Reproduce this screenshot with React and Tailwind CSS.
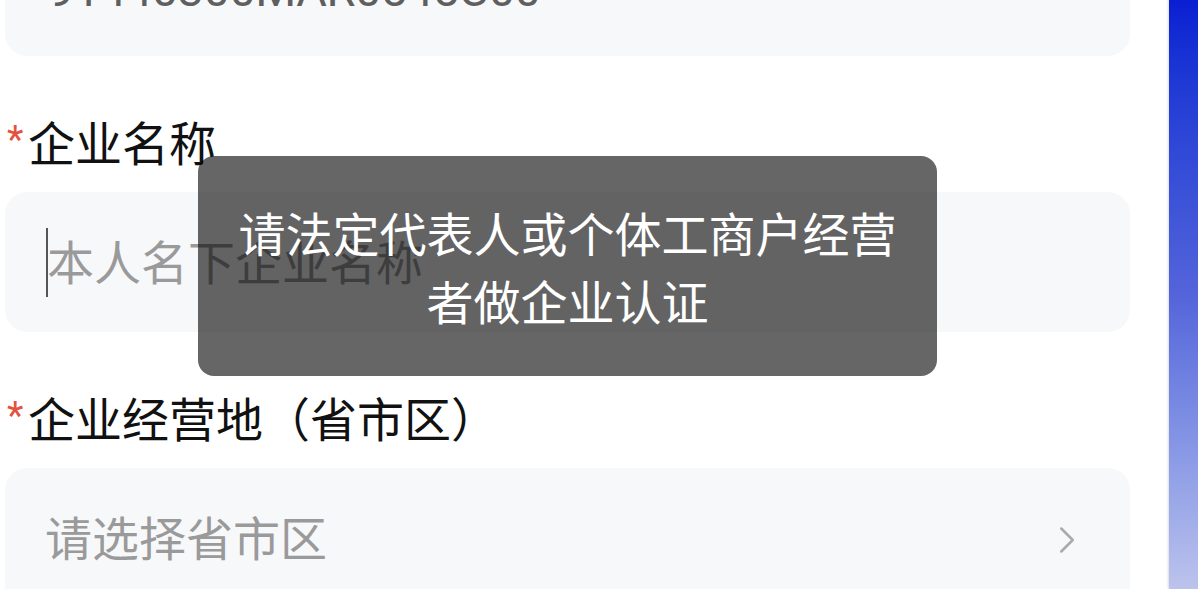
import { ChevronRight } from 'lucide-react'

const font = { fontFamily: 'Roboto, "Noto Sans CJK SC", sans-serif' }

function Label({ children }) {
  return (
    <div className="flex h-16 shrink-0 items-start pl-[2px]">
      <span className="mt-[9px] w-[21px] text-[38px] leading-none text-[#e2523f]">*</span>
      <span className="self-center text-[47px] leading-none text-[#111]">{children}</span>
    </div>
  )
}

export default function App() {
  return (
    <div className="relative flex h-[589px] w-[1198px] overflow-hidden bg-white" style={font}>
      <main className="flex flex-1 flex-col pl-[5px] pr-[39px]">
        {/* 统一社会信用代码 */}
        <div className="-mt-[84px] flex h-[140px] shrink-0 items-center rounded-[22px] bg-[#f7f8fa] px-[43px] pt-[9px]">
          <span className="text-[47px] tracking-[-0.5px] text-[#5f5f5f]">91440300MAR0545C00</span>
        </div>

        <div className="mt-[56px] shrink-0">
          <Label>企业名称</Label>
        </div>
        <div className="mt-4 flex h-[140px] shrink-0 items-center rounded-[22px] bg-[#f7f8fa] pl-[41px]">
          <span className="h-[69px] w-[2px] bg-[#555]" />
          <span className="-ml-[1px] pt-[4px] text-[47px] text-[#9a9a9a]">本人名下企业名称</span>
        </div>

        <div className="mt-[56px] shrink-0">
          <Label>企业经营地（省市区）</Label>
        </div>
        <div className="mt-4 flex h-[140px] shrink-0 items-center justify-between rounded-[22px] bg-[#f7f8fa] pl-[40px] pr-[40px]">
          <span className="pt-[4px] text-[47px] text-[#9a9a9a]">请选择省市区</span>
          <ChevronRight className="mt-[3px] h-[46px] w-[46px] text-[#aaa]" strokeWidth={1.3} />
        </div>
      </main>

      <div className="w-[29px] bg-gradient-to-b from-[#0a1ed2] via-[#5464da] to-[#bcc3ec] shadow-[-1px_0_2px_rgba(0,0,0,0.15)]" />

      {/* toast */}
      <div className="absolute left-[198px] top-[156px] w-[739px] rounded-[16px] bg-black/60 px-[40px] pb-[38px] pt-[46px] text-center text-[47px] leading-[68px] text-white">
        请法定代表人或个体工商户经营
        <br />
        者做企业认证
      </div>
    </div>
  )
}
